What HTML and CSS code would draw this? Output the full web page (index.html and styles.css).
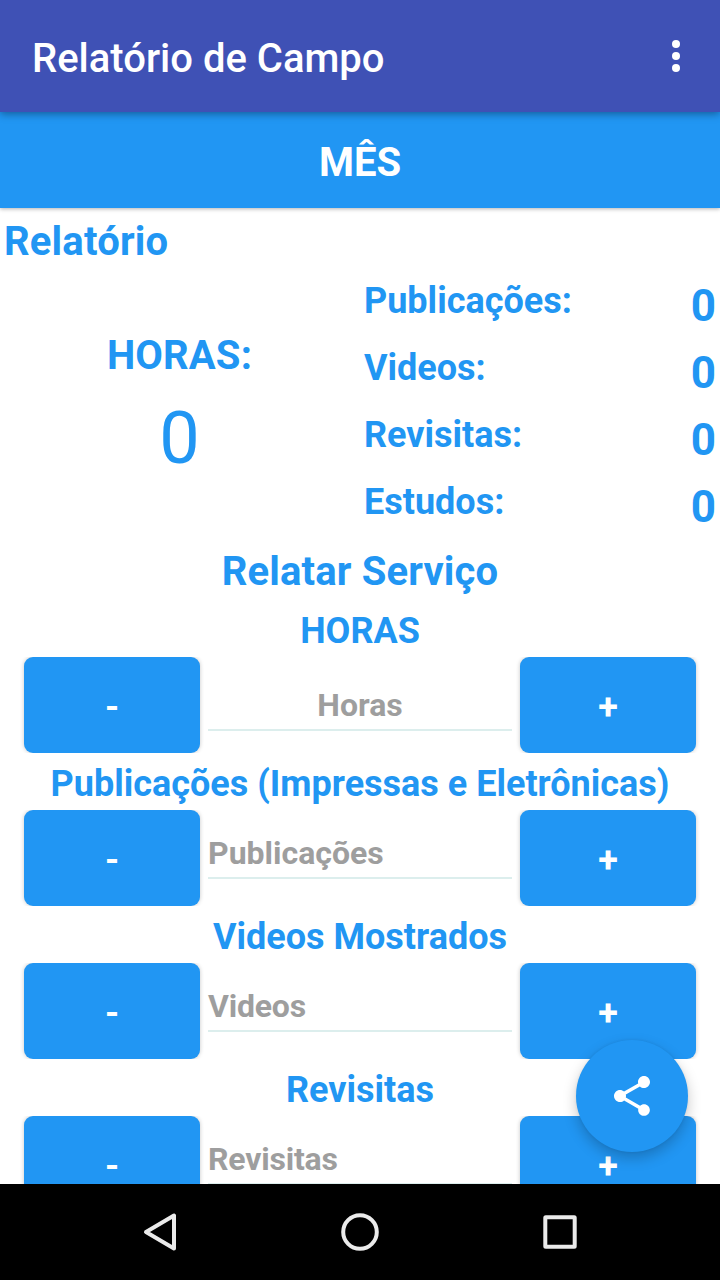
FILE: index.html
```html
<!DOCTYPE html>
<html lang="pt">
<head>
<meta charset="utf-8">
<title>Relatório de Campo</title>
<link rel="stylesheet" href="styles.css">
</head>
<body>
<div class="screen">
  <header class="app-bar">
    <h1 class="app-title">Relatório de Campo</h1>
    <svg class="overflow" width="8" height="32" viewBox="0 0 8 32"><circle cx="4" cy="4" r="4"/><circle cx="4" cy="16" r="4"/><circle cx="4" cy="28" r="4"/></svg>
  </header>
  <div class="month">MÊS</div>
  <main class="content">
    <h2 class="report-title">Relatório</h2>
    <section class="summary">
      <div class="hours">
        <div class="hours-label">HORAS:</div>
        <div class="hours-value">0</div>
      </div>
      <div class="stats">
        <div class="stat"><span>Publicações:</span><span class="stat-value">0</span></div>
        <div class="stat"><span>Videos:</span><span class="stat-value">0</span></div>
        <div class="stat"><span>Revisitas:</span><span class="stat-value">0</span></div>
        <div class="stat"><span>Estudos:</span><span class="stat-value">0</span></div>
      </div>
    </section>
    <h2 class="form-title">Relatar Serviço</h2>
    <section class="counter">
      <h3 class="counter-title">HORAS</h3>
      <div class="counter-row">
        <button class="step">-</button>
        <div class="field field-centered">Horas</div>
        <button class="step">+</button>
      </div>
    </section>
    <section class="counter">
      <h3 class="counter-title">Publicações (Impressas e Eletrônicas)</h3>
      <div class="counter-row">
        <button class="step">-</button>
        <div class="field">Publicações</div>
        <button class="step">+</button>
      </div>
    </section>
    <section class="counter">
      <h3 class="counter-title">Videos Mostrados</h3>
      <div class="counter-row">
        <button class="step">-</button>
        <div class="field field-tight">Videos</div>
        <button class="step">+</button>
      </div>
    </section>
    <section class="counter">
      <h3 class="counter-title">Revisitas</h3>
      <div class="counter-row">
        <button class="step">-</button>
        <div class="field field-tight">Revisitas</div>
        <button class="step">+</button>
      </div>
    </section>
    <button class="fab" aria-label="Compartilhar">
      <svg width="48" height="48" viewBox="0 0 24 24"><path d="M18 16.08c-.76 0-1.44.3-1.96.77L8.91 12.7c.05-.23.09-.46.09-.7s-.04-.47-.09-.7l7.05-4.11c.54.5 1.25.81 2.04.81 1.66 0 3-1.34 3-3s-1.34-3-3-3-3 1.34-3 3c0 .24.04.47.09.7L8.04 9.81C7.5 9.31 6.79 9 6 9c-1.66 0-3 1.34-3 3s1.34 3 3 3c.79 0 1.5-.31 2.04-.81l7.12 4.16c-.05.21-.08.43-.08.65 0 1.61 1.31 2.92 2.92 2.92s2.92-1.31 2.92-2.92-1.31-2.92-2.92-2.92z"/></svg>
    </button>
  </main>
  <nav class="nav-bar">
    <svg width="40" height="40" viewBox="0 0 40 40"><path d="M34 3.5V36.5L6 20Z"/></svg>
    <svg width="40" height="40" viewBox="0 0 40 40"><circle cx="20" cy="20" r="16.8"/></svg>
    <svg width="40" height="40" viewBox="0 0 40 40"><rect x="5.3" y="5.3" width="29.4" height="29.4" rx="0.5"/></svg>
  </nav>
</div>
</body>
</html>
```

FILE: styles.css
```css
* { box-sizing: border-box; }

body {
  margin: 0;
  font-family: Roboto, "Liberation Sans", sans-serif;
  font-weight: 700;
  color: #2196f3;
  background: #fff;
}

h1, h2, h3 { margin: 0; }

.screen {
  display: flex;
  flex-direction: column;
  width: 720px;
  height: 1280px;
  overflow: hidden;
}

.app-bar {
  position: relative;
  z-index: 2;
  display: flex;
  flex: none;
  align-items: center;
  justify-content: space-between;
  height: 112px;
  padding: 0 40px 0 32px;
  background: #3f51b5;
  box-shadow: 0 2px 8px rgba(0, 0, 0, 0.38);
}

.app-title {
  padding-top: 6px;
  font-size: 40px;
  font-weight: 500;
  line-height: 48px;
  color: #fff;
}

.overflow { fill: #fff; }

.month {
  position: relative;
  z-index: 1;
  flex: none;
  height: 96px;
  padding-top: 27px;
  font-size: 40px;
  line-height: 48px;
  text-align: center;
  color: #fff;
  background: #2196f3;
  box-shadow: 0 1px 4px rgba(0, 0, 0, 0.3);
}

.content {
  position: relative;
  flex: 1;
  min-height: 0;
  padding-top: 10px;
  overflow: hidden;
}

.report-title {
  padding-left: 4px;
  font-size: 40px;
  line-height: 48px;
  letter-spacing: 0.18px;
}

.summary {
  display: grid;
  grid-template-columns: 1fr 1fr;
  height: 282px;
  padding-top: 14px;
}

.hours {
  padding: 52px 1px 0 0;
  text-align: center;
}

.hours-label {
  font-size: 40px;
  line-height: 48px;
  letter-spacing: 0.15px;
}

.hours-value {
  margin-top: 17px;
  font-size: 72px;
  font-weight: 400;
  line-height: 84px;
}

.stats { padding: 0 4px; }

.stat {
  display: flex;
  align-items: flex-start;
  justify-content: space-between;
  height: 67px;
  font-size: 36px;
  line-height: 42px;
}

.stat-value {
  font-size: 44px;
  line-height: 52px;
}

.form-title {
  margin-bottom: 5px;
  font-size: 40px;
  line-height: 47px;
  letter-spacing: 0.15px;
  text-align: center;
}

.counter { padding: 10px 24px 0; }

.counter-title {
  margin-bottom: 5px;
  font-size: 36px;
  line-height: 42px;
  text-align: center;
}

.counter-row {
  display: grid;
  grid-template-columns: 176px 1fr 176px;
  gap: 8px;
  height: 96px;
}

.step {
  padding: 4px 0 0;
  border: 0;
  border-radius: 9px;
  font: 700 36px/32px Roboto, "Liberation Sans", sans-serif;
  color: #fff;
  background: #2196f3;
  box-shadow: 0 0 4px rgba(0, 0, 0, 0.22);
  clip-path: inset(0 -6px 0 -6px);
}

.field {
  align-self: start;
  margin-top: 24px;
  padding-bottom: 5px;
  border-bottom: 2px solid #dceeed;
  font-size: 32px;
  line-height: 38px;
  color: #9e9e9e;
}

.field-centered {
  margin-top: 29px;
  text-align: center;
}

.field-tight { letter-spacing: -0.2px; }

.fab {
  position: absolute;
  right: 32px;
  bottom: 32px;
  display: flex;
  align-items: center;
  justify-content: center;
  width: 112px;
  height: 112px;
  padding: 0;
  border: 0;
  border-radius: 50%;
  background: #2196f3;
  box-shadow: 0 6px 14px rgba(0, 0, 0, 0.22), 0 0 3px rgba(0, 0, 0, 0.08);
}

.fab svg { fill: #fff; }

.nav-bar {
  display: flex;
  flex: none;
  align-items: center;
  justify-content: center;
  gap: 160px;
  height: 96px;
  background: #000;
}

.nav-bar svg {
  fill: none;
  stroke: #ebebeb;
  stroke-width: 4;
  stroke-linejoin: round;
}
```
